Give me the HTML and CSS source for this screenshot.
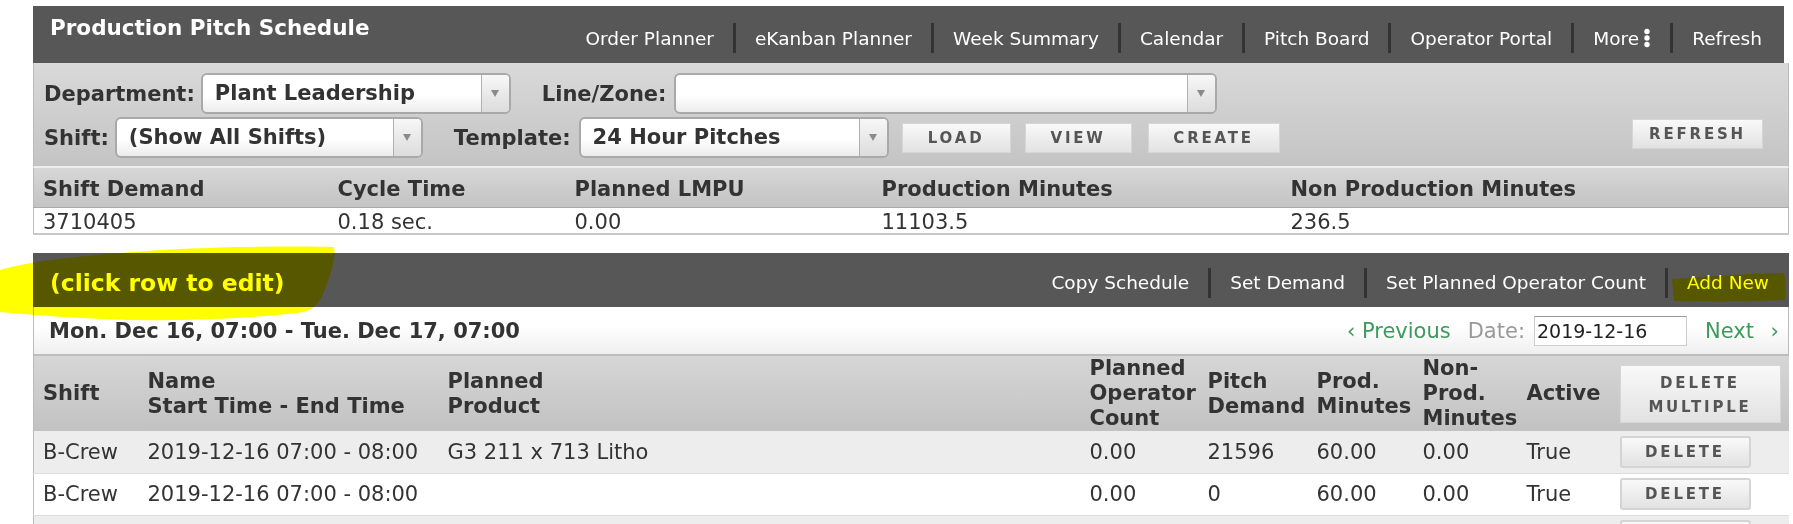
FILE: index.html
```html
<!DOCTYPE html>
<html lang="en">
<head>
  <meta charset="UTF-8">
  <title>Production Pitch Schedule</title>
  <link rel="stylesheet" href="styles.css">
</head>
<body>
  <div class="page">
    <div class="topbar">
      <h1 class="title">Production Pitch Schedule</h1>
      <nav class="menu">
        <a>Order Planner</a>
        <a>eKanban Planner</a>
        <a>Week Summary</a>
        <a>Calendar</a>
        <a>Pitch Board</a>
        <a>Operator Portal</a>
        <a>More <svg class="dots" width="8" height="20" viewBox="0 0 8 20"><circle cx="4" cy="3.5" r="2.7"/><circle cx="4" cy="10" r="2.7"/><circle cx="4" cy="16.5" r="2.7"/></svg></a>
        <a>Refresh</a>
      </nav>
    </div>

    <div class="filters">
      <div class="filter-row">
        <label>Department:</label>
        <div class="select sel-dept"><span>Plant Leadership</span><i class="arrow"></i></div>
        <label class="spaced">Line/Zone:</label>
        <div class="select sel-line"><span></span><i class="arrow"></i></div>
      </div>
      <div class="filter-row">
        <label>Shift:</label>
        <div class="select sel-shift"><span>(Show All Shifts)</span><i class="arrow"></i></div>
        <label class="spaced">Template:</label>
        <div class="select sel-template"><span>24 Hour Pitches</span><i class="arrow"></i></div>
        <button class="btn btn-load">LOAD</button>
        <button class="btn btn-view">VIEW</button>
        <button class="btn btn-create">CREATE</button>
        <button class="btn btn-refresh">REFRESH</button>
      </div>
    </div>

    <table class="summary">
      <colgroup>
        <col style="width:295px"><col style="width:237px"><col style="width:307px"><col style="width:409px"><col>
      </colgroup>
      <thead>
        <tr><th>Shift Demand</th><th>Cycle Time</th><th>Planned LMPU</th><th>Production Minutes</th><th>Non Production Minutes</th></tr>
      </thead>
      <tbody>
        <tr><td>3710405</td><td>0.18 sec.</td><td>0.00</td><td>11103.5</td><td>236.5</td></tr>
      </tbody>
    </table>

    <div class="toolbar">
      <span class="hint">(click row to edit)</span>
      <nav class="menu">
        <a>Copy Schedule</a>
        <a>Set Demand</a>
        <a>Set Planned Operator Count</a>
        <a>Add New</a>
      </nav>
    </div>

    <div class="datebar">
      <strong>Mon. Dec 16, 07:00 - Tue. Dec 17, 07:00</strong>
      <div class="pager">
        <a class="green">&lsaquo; Previous</a>
        <span class="date-label">Date:</span>
        <input class="date-input" type="text" value="2019-12-16">
        <a class="green">Next <span class="next-arrow">&rsaquo;</span></a>
      </div>
    </div>

    <table class="pitches">
      <colgroup>
        <col style="width:105px"><col style="width:300px"><col style="width:642px"><col style="width:118px"><col style="width:109px"><col style="width:106px"><col style="width:104px"><col style="width:93px"><col>
      </colgroup>
      <thead>
        <tr>
          <th>Shift</th>
          <th>Name<br>Start Time - End Time</th>
          <th>Planned<br>Product</th>
          <th>Planned<br>Operator<br>Count</th>
          <th>Pitch<br>Demand</th>
          <th>Prod.<br>Minutes</th>
          <th>Non-<br>Prod.<br>Minutes</th>
          <th>Active</th>
          <th><button class="btn btn-multi">DELETE<br>MULTIPLE</button></th>
        </tr>
      </thead>
      <tbody>
        <tr>
          <td>B-Crew</td><td>2019-12-16 07:00 - 08:00</td><td>G3 211 x 713 Litho</td><td>0.00</td><td>21596</td><td>60.00</td><td>0.00</td><td>True</td>
          <td><button class="btn btn-delete">DELETE</button></td>
        </tr>
        <tr>
          <td>B-Crew</td><td>2019-12-16 07:00 - 08:00</td><td></td><td>0.00</td><td>0</td><td>60.00</td><td>0.00</td><td>True</td>
          <td><button class="btn btn-delete">DELETE</button></td>
        </tr>
        <tr>
          <td>B-Crew</td><td>2019-12-16 08:00 - 09:00</td><td></td><td>0.00</td><td>0</td><td>60.00</td><td>0.00</td><td>True</td>
          <td><button class="btn btn-delete">DELETE</button></td>
        </tr>
      </tbody>
    </table>
  </div>

  <!-- highlighter strokes drawn over the screenshot -->
  <svg class="marker marker-hint" width="340" height="80" viewBox="0 0 340 80">
    <path d="M0 24 C30 15 90 8 180 3 C250 0 310 0 334 1 C336 12 330 32 322 50 C318 60 310 65 298 67 C240 73 170 76 100 73 C60 71 20 68 0 66 Z"/>
  </svg>
  <svg class="marker marker-add" width="116" height="30" viewBox="0 0 116 30">
    <path d="M0 6 C30 4 70 1 112 0 C114 8 114 20 113 27 C80 29 40 29 2 28 Z"/>
  </svg>
</body>
</html>
```

FILE: styles.css
```css
* {
  box-sizing: border-box;
  margin: 0;
  padding: 0;
}
body {
  position: relative;
  background: #fff;
  color: #333;
  font-family: "DejaVu Sans", Verdana, sans-serif;
  font-size: 21px;
  overflow: hidden;
}
.page {
  padding: 6px 4px 0 33px;
}

/* top bar */
.topbar {
  display: flex;
  justify-content: space-between;
  height: 57px;
  margin-right: 5px;
  background: #575757;
  color: #fff;
}
.title {
  padding: 9px 0 0 17px;
  font-size: 21.5px;
  line-height: 26px;
  font-weight: bold;
}
.menu {
  display: flex;
  align-items: center;
  padding-top: 7px;
}
.menu a {
  display: flex;
  align-items: center;
  gap: 4px;
  height: 30px;
  padding: 0 19px;
  color: #fff;
  font-size: 18.5px;
}
.menu a + a {
  border-left: 3px solid #333;
}
.topbar .menu a:last-child {
  padding-right: 22px;
}
.dots {
  fill: #fff;
}

/* filters */
.filters {
  padding: 10px 0 8px 10px;
  background: linear-gradient(#d9d9d9, #c4c4c4);
  border: 1px solid #bbb;
  border-top: none;
  border-bottom: 2px solid #eee;
}
.filter-row {
  display: flex;
  align-items: center;
}
.filter-row + .filter-row {
  margin-top: 3px;
}
.filter-row label {
  font-weight: bold;
  margin-right: 6px;
}
.filter-row label.spaced {
  margin-left: 31px;
  margin-right: 8px;
}
.select {
  display: flex;
  height: 41px;
  border: 2px solid #a9a9a9;
  border-radius: 6px;
  background: linear-gradient(#fff 55%, #ececec);
  overflow: hidden;
}
.select span {
  flex: 1;
  padding-left: 12px;
  line-height: 37px;
  font-weight: bold;
  white-space: nowrap;
}
.select .arrow {
  position: relative;
  width: 28px;
  border-left: 1px solid #b0b0b0;
  background: linear-gradient(#f7f7f7, #dcdcdc);
}
.select .arrow::after {
  content: "";
  position: absolute;
  left: 9px;
  top: 15px;
  border-left: 4px solid transparent;
  border-right: 4px solid transparent;
  border-top: 7px solid #8a8a8a;
}
.sel-dept { width: 310px; }
.sel-line { width: 543px; }
.sel-shift { width: 308px; }
.sel-template { width: 310px; }

.btn {
  height: 30px;
  border: 1px solid #d6d6d6;
  background: linear-gradient(#f9f9f9, #e2e2e2);
  color: #555;
  font-family: "DejaVu Sans", Verdana, sans-serif;
  font-size: 15px;
  font-weight: bold;
  letter-spacing: 2.8px;
}
.btn-load { width: 109px; margin-left: 13px; }
.btn-view { width: 107px; margin-left: 14px; }
.btn-create { width: 132px; margin-left: 16px; }
.btn-refresh { width: 131px; margin-left: auto; margin-right: 25px; margin-top: -7px; }

/* summary */
table {
  width: 100%;
  border-collapse: collapse;
  table-layout: fixed;
}
.summary {
  border-left: 1px solid #bbb;
  border-right: 1px solid #bbb;
  border-bottom: 2px solid #c8c8c8;
}
.summary th {
  height: 39px;
  padding: 3px 0 0 9px;
  line-height: 24px;
  text-align: left;
  background: linear-gradient(#d7d7d7, #c3c3c3);
  border-bottom: 1px solid #aaa;
}
.summary td {
  height: 27px;
  padding: 3px 0 0 9px;
  line-height: 22px;
}

/* schedule toolbar */
.toolbar {
  display: flex;
  justify-content: space-between;
  align-items: center;
  height: 54px;
  margin-top: 18px;
  background: #575757;
  color: #fff;
}
.hint {
  padding: 5px 0 0 17px;
  font-weight: bold;
  font-size: 23.5px;
}
.toolbar .menu {
  padding-top: 5px;
}
.toolbar .menu a:last-child {
  padding-right: 20px;
}

.datebar {
  display: flex;
  justify-content: space-between;
  align-items: center;
  height: 49px;
  padding: 0 9px 0 15px;
  background: linear-gradient(#fff 40%, #efefef);
  border-left: 1px solid #bbb;
  border-right: 1px solid #bbb;
  border-bottom: 2px solid #bdbdbd;
}
.pager {
  display: flex;
  align-items: center;
}
.green {
  color: #3d9a5c;
}
.next-arrow {
  margin-left: 10px;
}
.date-label {
  margin-left: 17px;
  color: #999;
}
.date-input {
  width: 153px;
  height: 30px;
  margin: 0 18px 0 9px;
  padding-left: 2px;
  border: 1px solid #ccc;
  border-top-color: #999;
  font-family: "DejaVu Sans", Verdana, sans-serif;
  font-size: 19px;
  color: #222;
}

/* pitch table */
.pitches {
  border-left: 1px solid #bbb;
}
.pitches th {
  height: 75px;
  padding-left: 9px;
  text-align: left;
  line-height: 25px;
  vertical-align: middle;
  background: linear-gradient(#d6d6d6, #c2c2c2);
}
.pitches td {
  height: 42px;
  padding-left: 9px;
  border-bottom: 1px solid #ddd;
  white-space: nowrap;
}
.pitches tbody tr:nth-child(odd) {
  background: #ededed;
}
.btn-multi {
  width: 161px;
  height: 58px;
  line-height: 24px;
  padding-top: 2px;
}
.btn-delete {
  width: 131px;
  height: 32px;
  border: 2px solid #d4d4d4;
  border-radius: 3px;
}

/* highlighter */
.marker {
  position: absolute;
  fill: #ffff00;
  mix-blend-mode: multiply;
}
.marker-hint {
  left: 0;
  top: 246px;
}
.marker-add {
  left: 1672px;
  top: 273px;
}
```
